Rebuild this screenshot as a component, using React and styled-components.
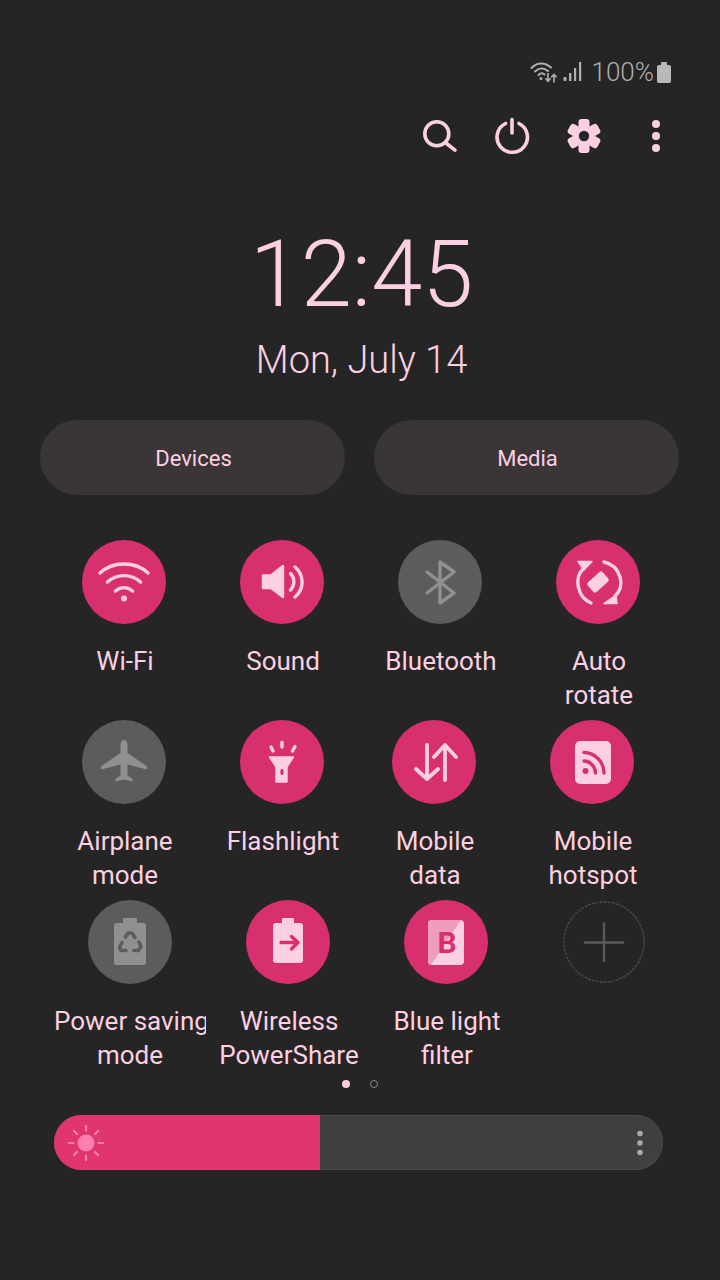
import React from 'react';
import styled, { createGlobalStyle } from 'styled-components';

const PINK = '#fcd0e2';
const ACTIVE = '#d8306e';
const OFF = '#5c5c5c';
const OFF_ICON = '#909090';

const GlobalStyle = createGlobalStyle`
  html, body {
    margin: 0;
    padding: 0;
    background: #252525;
  }
  body {
    font-family: Roboto, "Liberation Sans", sans-serif;
  }
`;

const Page = styled.div`
  width: 720px;
  height: 1280px;
  overflow: hidden;
  box-sizing: border-box;
  padding-top: 56px;
  background: #252525;
  color: ${PINK};
`;

const StatusBar = styled.div`
  height: 32px;
  display: flex;
  align-items: center;
  justify-content: flex-end;
  padding-right: 49px;
  color: #b0b0b0;
`;

const Percent = styled.span`
  font-size: 26px;
  font-weight: 300;
  margin: 0 3px 0 9px;
`;

const Toolbar = styled.div`
  display: flex;
  justify-content: flex-end;
  margin-top: 28px;
  padding-right: 28px;
`;

const ToolButton = styled.div`
  width: 72px;
  height: 40px;
  display: flex;
  justify-content: center;
`;

const Clock = styled.div`
  margin-top: 67px;
  padding-left: 3px;
  text-align: center;
`;

const Time = styled.div`
  font-size: 92px;
  font-weight: 300;
  line-height: 104px;
`;

const DateText = styled.div`
  font-size: 38px;
  font-weight: 300;
  line-height: 44px;
  margin-top: 11px;
`;

const Pills = styled.div`
  display: flex;
  gap: 29px;
  margin-top: 38px;
  padding-left: 40px;
`;

const Pill = styled.div`
  width: 305px;
  height: 75px;
  box-sizing: border-box;
  padding: 2px 0 0 2px;
  border-radius: 38px;
  background: #3a3536;
  display: flex;
  align-items: center;
  justify-content: center;
  font-size: 22px;
`;

const Grid = styled.div`
  margin-top: 45px;
`;

const TileRow = styled.div`
  display: flex;
  height: 180px;
  padding-left: ${(p) => p.$inset}px;
`;

const Tile = styled.div`
  width: 158px;
  flex: none;
  margin-left: ${(p) => p.$nudge || 0}px;
  display: flex;
  flex-direction: column;
  align-items: center;
`;

const Circle = styled.div`
  width: 84px;
  height: 84px;
  border-radius: 50%;
  flex: none;
  background: ${(p) => (p.$on ? ACTIVE : OFF)};
  svg {
    display: block;
  }
`;

const AddCircle = styled.div`
  width: 84px;
  height: 84px;
  flex: none;
  svg {
    display: block;
  }
`;

const Label = styled.div`
  width: 152px;
  box-sizing: border-box;
  padding-left: ${(p) => (p.$flush ? 0 : 2)}px;
  margin-top: 20px;
  overflow: hidden;
  text-align: center;
  white-space: pre;
  font-size: 26px;
  line-height: 34px;
`;

const Pager = styled.div`
  height: 8px;
  display: flex;
  align-items: center;
  gap: 20px;
  padding-left: 342px;
`;

const PagerDot = styled.span`
  width: 8px;
  height: 8px;
  box-sizing: border-box;
  border-radius: 50%;
  background: ${(p) => (p.$active ? PINK : 'transparent')};
  border: ${(p) => (p.$active ? 'none' : '1.5px solid #8a8a8a')};
`;

const Slider = styled.div`
  width: 609px;
  height: 55px;
  box-sizing: border-box;
  margin: 27px 0 0 54px;
  border-radius: 28px;
  overflow: hidden;
  background: #404040;
  display: flex;
  align-items: center;
  box-shadow: inset 0 0 0 1px #484848;
`;

const SliderFill = styled.div`
  width: 266px;
  height: 100%;
  background: #e0356f;
  flex: none;
  svg {
    display: block;
  }
`;

const SliderMore = styled.div`
  margin-left: auto;
  margin-right: 18px;
  svg {
    display: block;
  }
`;

const WifiStatusIcon = () => (
  <svg width="28" height="24" viewBox="0 0 28 24" fill="none" stroke="#b0b0b0" strokeLinecap="round">
    <path d="M1.5 8C7 2 15 2 21 7.5" strokeWidth="2" />
    <path d="M5 11.5C9 7.5 14 7.5 18 11" strokeWidth="2" />
    <path d="M8.5 15C10.5 13 13 13 14.5 14.5" strokeWidth="2" />
    <circle cx="11" cy="18.5" r="1.5" fill="#b0b0b0" stroke="none" />
    <path d="M18 13.5V21M15.8 18.8L18 21.2L20.2 18.8" strokeWidth="1.6" />
    <path d="M24 22V14.5M21.8 16.8L24 14.4L26.2 16.8" strokeWidth="1.6" />
  </svg>
);

const SignalIcon = () => (
  <svg width="20" height="24" viewBox="0 0 20 24" fill="#b0b0b0" style={{ marginLeft: 5 }}>
    <rect x="0.5" y="17" width="3" height="4" rx="1" />
    <rect x="6" y="13" width="2.4" height="8" />
    <rect x="11" y="8" width="2.2" height="13" />
    <rect x="16" y="2" width="2.2" height="19" />
  </svg>
);

const BatteryIcon = () => (
  <svg width="14" height="24" viewBox="0 0 14 24" fill="#b8b8b8">
    <rect x="0" y="5" width="14" height="18" rx="2" />
    <rect x="4" y="2" width="6" height="4" rx="1" />
  </svg>
);

const SearchIcon = () => (
  <svg width="40" height="40" viewBox="0 0 40 40" fill="none" stroke={PINK} strokeWidth="3.6" strokeLinecap="round">
    <circle cx="16.8" cy="17.8" r="12" />
    <path d="M26.5 27.5L35 34.2" />
  </svg>
);

const PowerIcon = () => (
  <svg width="40" height="40" viewBox="0 0 40 40" fill="none" stroke={PINK} strokeWidth="3.6" strokeLinecap="round">
    <path d="M13.5 7.5A15.2 15.2 0 1 0 27 7.5" />
    <path d="M20 3.5V17" />
  </svg>
);

const GearIcon = () => (
  <svg width="40" height="40" viewBox="0 0 40 40" fill={PINK}>
    <rect x="14.5" y="3" width="11" height="34" rx="3" />
    <rect x="14.5" y="3" width="11" height="34" rx="3" transform="rotate(60 20 20)" />
    <rect x="14.5" y="3" width="11" height="34" rx="3" transform="rotate(120 20 20)" />
    <circle cx="20" cy="20" r="10.5" />
    <circle cx="20" cy="20" r="5.2" fill="#252525" />
  </svg>
);

const MoreIcon = () => (
  <svg width="40" height="40" viewBox="0 0 40 40" fill={PINK}>
    <circle cx="20" cy="8" r="4" />
    <circle cx="20" cy="20" r="4" />
    <circle cx="20" cy="32" r="4" />
  </svg>
);

const Tile84 = ({ children, fill = 'none', stroke = PINK, width = 3.4 }) => (
  <svg width="84" height="84" viewBox="0 0 84 84" fill={fill} stroke={stroke} strokeWidth={width} strokeLinecap="round" strokeLinejoin="round">
    {children}
  </svg>
);

const WifiIcon = () => (
  <Tile84>
    <path d="M18 33C31 21 53 21 66 33" />
    <path d="M25.5 42C35 33.5 49 33.5 58.5 42" />
    <path d="M33.5 51C38.5 46.5 45.5 46.5 50.5 51" />
    <circle cx="42" cy="58.5" r="3" fill={PINK} stroke="none" />
  </Tile84>
);

const SoundIcon = () => (
  <Tile84>
    <path d="M23 35.5H31L43 26V57L31 48H23Z" fill={PINK} strokeWidth="2.4" />
    <path d="M50.5 33.5C55 38 55 45.5 50.5 50" />
    <path d="M55 27C64.5 35 64.5 49 55 57" />
  </Tile84>
);

const BluetoothIcon = () => (
  <Tile84 stroke={OFF_ICON}>
    <path d="M29 32L56 53L42 63V22L56 32L29 53" />
  </Tile84>
);

const RotateIcon = () => (
  <Tile84>
    <rect x="35.5" y="32" width="13" height="20" rx="2.5" fill={PINK} stroke="none" transform="rotate(48 42 42)" />
    <path d="M27 29C18 38 21 57 35 63" />
    <path d="M48 22C65 26 70 46 59 56" />
    <path d="M22 21.5H36L28 30Z" fill={PINK} strokeWidth="1.5" />
    <path d="M48 63.5H61L60 55Z" fill={PINK} strokeWidth="1.5" />
  </Tile84>
);

const PlaneIcon = () => (
  <Tile84 fill={OFF_ICON} stroke="none">
    <path d="M42 20c-2 0-3.5 2-3.5 5v8L19 46.5v3l19.5-5v11l-5 3.5v2.5l8.5-2 8.5 2V59l-5-3.5v-11l19.5 5v-3L45.5 33v-8c0-3-1.5-5-3.5-5z" />
  </Tile84>
);

const FlashlightIcon = () => (
  <Tile84>
    <path d="M29.5 37H53.5L47 47V62H36V47Z" fill={PINK} strokeWidth="1.4" />
    <rect x="40.4" y="49" width="3.2" height="6" rx="1.6" fill={ACTIVE} stroke="none" />
    <path d="M31 27L33 31" />
    <path d="M42 22.5V27" />
    <path d="M55 26.5L52.5 31" />
  </Tile84>
);

const DataIcon = () => (
  <Tile84 width={3.8}>
    <path d="M35 25V58M24 49L35 59L46 49" />
    <path d="M53 60V26M42 37L53 25L64 37" />
  </Tile84>
);

const HotspotIcon = () => (
  <Tile84>
    <rect x="25" y="21" width="36" height="43" rx="5" fill={PINK} stroke="none" />
    <circle cx="35.5" cy="51" r="3" fill={ACTIVE} stroke="none" />
    <path d="M34 41C40 41 45.5 46.5 45.5 53" stroke={ACTIVE} />
    <path d="M34 32.5C45 32.5 54 42 54 53" stroke={ACTIVE} />
  </Tile84>
);

const SavingIcon = () => (
  <Tile84 stroke={OFF} width={3.6}>
    <rect x="26" y="23" width="32" height="42" rx="2.5" fill={OFF_ICON} stroke="none" />
    <rect x="35" y="18" width="14" height="6" rx="1" fill={OFF_ICON} stroke="none" />
    <path d="M37.5 37L40 33H44L47 37.5" />
    <path d="M51 42L53 46.5L50.5 50.5H46" />
    <path d="M38 50.5H33L31.5 47L34 42.5" />
  </Tile84>
);

const PowerShareIcon = () => (
  <Tile84 stroke={ACTIVE}>
    <rect x="27" y="23" width="30" height="40" rx="3" fill={PINK} stroke="none" />
    <rect x="36" y="18" width="12" height="6" rx="1" fill={PINK} stroke="none" />
    <path d="M35 42.5H51M45.5 36.5L52 42.5L45.5 49" />
  </Tile84>
);

const BlueLightIcon = () => (
  <Tile84 stroke="none">
    <rect x="24" y="20" width="36" height="45" rx="4" fill={PINK} />
    <path d="M28 20H57L27 65C25 65 24 63 24 61V24C24 22 26 20 28 20Z" fill="#f09cbf" />
    <text x="43" y="53" textAnchor="middle" fontFamily="Roboto, sans-serif" fontWeight="700" fontSize="30" fill={ACTIVE}>B</text>
  </Tile84>
);

const PlusIcon = () => (
  <svg width="84" height="84" viewBox="0 0 84 84" fill="none">
    <circle cx="42" cy="42" r="40" stroke="#484848" strokeWidth="1.4" strokeDasharray="3 1" />
    <path d="M23 42.5H61M42 23.5V61" stroke="#5a5a5a" strokeWidth="2.4" strokeLinecap="round" />
  </svg>
);

const SunIcon = () => (
  <svg width="64" height="55" viewBox="0 0 64 55" fill="none" stroke="#ff7fb1" strokeWidth="2.2" strokeLinecap="round">
    <circle cx="32" cy="28" r="8.5" fill="#ff7fb1" stroke="none" />
    <path d="M32 11V15.5M32 40.5V45M15 28H19.5M44.5 28H49" />
    <path d="M20 16L23 19M41 37L44 40M44 16L41 19M23 37L20 40" />
  </svg>
);

const SliderDots = () => (
  <svg width="10" height="30" viewBox="0 0 10 30" fill="#a9a9a9">
    <circle cx="5" cy="5.5" r="2.8" />
    <circle cx="5" cy="15" r="2.8" />
    <circle cx="5" cy="24.5" r="2.8" />
  </svg>
);

const rows = [
  {
    inset: 45,
    tiles: [
      { label: 'Wi-Fi', on: true, icon: <WifiIcon /> },
      { label: 'Sound', on: true, icon: <SoundIcon /> },
      { label: 'Bluetooth', icon: <BluetoothIcon /> },
      { label: 'Auto\nrotate', on: true, icon: <RotateIcon /> },
    ],
  },
  {
    inset: 45,
    tiles: [
      { label: 'Airplane\nmode', icon: <PlaneIcon /> },
      { label: 'Flashlight', on: true, icon: <FlashlightIcon /> },
      { label: 'Mobile\ndata', on: true, nudge: -6, icon: <DataIcon /> },
      { label: 'Mobile\nhotspot', on: true, icon: <HotspotIcon /> },
    ],
  },
  {
    inset: 51,
    tiles: [
      { label: 'Power saving\nmode', flush: true, icon: <SavingIcon /> },
      { label: 'Wireless\nPowerShare', on: true, icon: <PowerShareIcon /> },
      { label: 'Blue light\nfilter', on: true, icon: <BlueLightIcon /> },
      { label: '', add: true },
    ],
  },
];

export default function App() {
  return (
    <>
      <GlobalStyle />
      <Page>
        <StatusBar>
          <WifiStatusIcon />
          <SignalIcon />
          <Percent>100%</Percent>
          <BatteryIcon />
        </StatusBar>
        <Toolbar>
          <ToolButton><SearchIcon /></ToolButton>
          <ToolButton><PowerIcon /></ToolButton>
          <ToolButton><GearIcon /></ToolButton>
          <ToolButton><MoreIcon /></ToolButton>
        </Toolbar>
        <Clock>
          <Time>12:45</Time>
          <DateText>Mon, July 14</DateText>
        </Clock>
        <Pills>
          <Pill>Devices</Pill>
          <Pill>Media</Pill>
        </Pills>
        <Grid>
          {rows.map((row, i) => (
            <TileRow key={i} $inset={row.inset}>
              {row.tiles.map((tile, j) => (
                <Tile key={j} $nudge={tile.nudge}>
                  {tile.add ? (
                    <AddCircle><PlusIcon /></AddCircle>
                  ) : (
                    <Circle $on={tile.on}>{tile.icon}</Circle>
                  )}
                  {tile.label && <Label $flush={tile.flush}>{tile.label}</Label>}
                </Tile>
              ))}
            </TileRow>
          ))}
        </Grid>
        <Pager>
          <PagerDot $active />
          <PagerDot />
        </Pager>
        <Slider>
          <SliderFill>
            <SunIcon />
          </SliderFill>
          <SliderMore>
            <SliderDots />
          </SliderMore>
        </Slider>
      </Page>
    </>
  );
}
